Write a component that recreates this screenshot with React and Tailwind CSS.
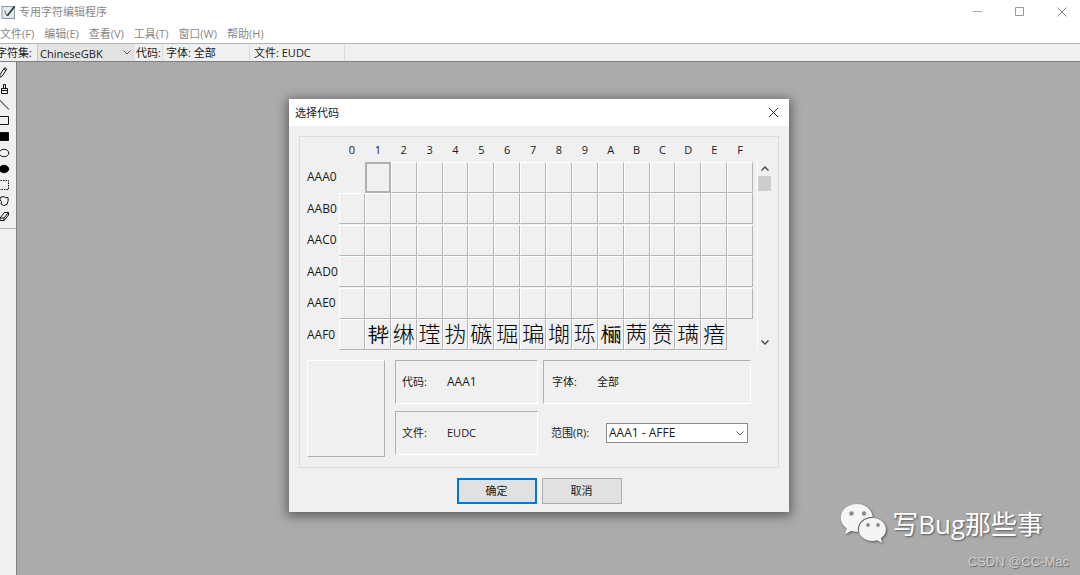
const COLUMNS = "0123456789ABCDEF".split("");
const ROWS = ["AAA0", "AAB0", "AAC0", "AAD0", "AAE0", "AAF0"];
const GLYPHS = ["", "\u{2B592}", "\u{2C62D}", "\u{2C386}", "㧑", "䃚", "\u3ed5", "㻞", "\u365f", "\u{2C35B}", "\u{2AC94}", "\u{2C72F}", "\u{2C542}", "\u{2B7A9}", "瘖"];
const MENUS = ["文件(F)", "编辑(E)", "查看(V)", "工具(T)", "窗口(W)", "帮助(H)"];

const TOOLS = [
  ["铅笔", <path key="p" d="M-.5 10.500l.7-3.200L4.800.600l2 1.600-4.500 6.800zM4 2l2 1.600" />],
  ["刷子", <path key="p" d="M3.500 5.500v-4h2v4M1.500 5.500h6v5h-6zM1.500 7.500h6" />],
  ["直线", <path key="p" d="M-1 .5l10 10" />],
  ["空心矩形", <path key="p" d="M-2 1.500H8.500v8H-2" />],
  ["实心矩形", <path key="p" d="M-2 1.500H8.500v8H-2z" fill="#000" />],
  ["空心椭圆", <ellipse key="p" cx="4" cy="6" rx="4.800" ry="3.700" />],
  ["实心椭圆", <ellipse key="p" cx="4" cy="6" rx="4.800" ry="3.700" fill="#000" />],
  ["矩形选项", <path key="p" d="M-2 1.500H8.500v9H-2" strokeDasharray="1.500 1" />],
  ["任意图形选项", <path key="p" d="M0 2.500l4-1 1.600 1.200 2.400-.2.2 3-1.200 4-3.600 1-2.400-1.500.5-2.500L0 5z" />],
  ["橡皮擦", <path key="p" d="M0 7L4.500 1.500h4L4 7zM0 7v2.500h4V7M4 9.500L8.500 4V1.500" />],
];

function Chevron({ className, up }) {
  return (
    <svg className={className} viewBox="0 0 8 5" fill="none" stroke="currentColor">
      <path d={up ? "M.5 4.5L4 1l3.5 3.5" : "M.5.5L4 4 7.5.5"} />
    </svg>
  );
}

function Cell({ row, col }) {
  if ((row === 0 && col === 0) || (row === 5 && col === 15)) return <td />;
  const selected = row === 0 && col === 1;
  const code = ROWS[row].slice(0, 3) + COLUMNS[col];
  const edges = selected
    ? "border-2 border-[#b0b0b0]"
    : "border-t border-l border-t-white border-l-white border-r border-b border-r-[#b4b4b4] border-b-[#b4b4b4]";
  return (
    <td className="p-0">
      <button
        type="button"
        aria-label={code}
        className={`flex h-[31px] w-full items-center justify-center overflow-hidden pb-1 text-[22px] leading-none font-light text-black ${edges}`}
      >
        {row === 5 ? GLYPHS[col] : ""}
      </button>
    </td>
  );
}

function InfoBox({ label, value, className }) {
  return (
    <dl className={`flex h-[44px] items-center border-t border-l border-r border-b border-t-[#b0b0b0] border-l-[#b0b0b0] border-r-white border-b-white ${className}`}>
      <dt className="w-[45px]">{label}</dt>
      <dd>{value}</dd>
    </dl>
  );
}

function CodeDialog() {
  return (
    <section role="dialog" aria-label="选择代码" className="w-[500px] self-start bg-[#f0f0f0] shadow-[0_2px_10px_2px_rgba(0,0,0,0.45)]">
      <header className="flex h-[27px] items-center justify-between bg-white pr-[10px] pl-[6px]">
        <h2>选择代码</h2>
        <button type="button" aria-label="关闭">
          <svg className="size-[11px]" viewBox="0 0 11 11" stroke="#333" fill="none"><path d="M1 1l9 9M10 1l-9 9" /></svg>
        </button>
      </header>
      <div className="px-[10px] pt-[10px] pb-2">
        <div className="border border-[#dcdcdc] pr-[7px] pb-[10px] pl-[7px]">
          <div className="flex">
            <table className="w-[446px] table-fixed border-collapse">
              <colgroup>
                <col className="w-8" />
              </colgroup>
              <thead>
                <tr className="h-6">
                  <td />
                  {COLUMNS.map((c) => (
                    <th key={c} scope="col" className="p-0 pt-[2px] text-center font-normal">{c}</th>
                  ))}
                </tr>
              </thead>
              <tbody>
                {ROWS.map((r, i) => (
                  <tr key={r} className="odd:h-[32px] even:h-[31px]">
                    <th scope="row" className="p-0 text-left text-[12px] font-normal">{r}</th>
                    {COLUMNS.map((c, j) => <Cell key={c} row={i} col={j} />)}
                  </tr>
                ))}
              </tbody>
            </table>
            <div className="mt-6 ml-[4px] flex w-[14px] flex-col items-center border-l border-white text-[#505050]">
              <button type="button" aria-label="向上滚动" className="flex h-[15px] w-full items-center justify-center">
                <Chevron up className="h-[5px] w-2 stroke-[1.5]" />
              </button>
              <div className="h-[15px] w-full bg-[#cdcdcd]" />
              <button type="button" aria-label="向下滚动" className="mt-auto flex h-[15px] w-full items-center justify-center">
                <Chevron className="h-[5px] w-2 stroke-[1.5]" />
              </button>
            </div>
          </div>
          <div className="mt-[10px] flex gap-[10px]">
            <div className="h-[97px] w-[78px] border-t border-l border-r border-b border-t-white border-l-white border-r-[#b0b0b0] border-b-[#b0b0b0]" />
            <div className="grid grid-cols-[143px_208px] content-start gap-x-[5px] gap-y-[7px]">
              <InfoBox label="代码:" value={<span className="text-[12px]">AAA1</span>} className="pl-[6px]" />
              <InfoBox label="字体:" value="全部" className="pl-2" />
              <InfoBox label="文件:" value="EUDC" className="pl-[6px]" />
              <div className="flex items-center pl-2">
                <label htmlFor="range" className="w-[55px]">范围(R):</label>
                <span className="relative flex items-center">
                  <select id="range" className="h-5 w-[142px] appearance-none border border-[#8a8a8a] bg-white pl-[2px] text-[12px] leading-none">
                    <option>AAA1 - AFFE</option>
                  </select>
                  <Chevron className="pointer-events-none absolute right-[4px] h-[5px] w-2 text-[#555]" />
                </span>
              </div>
            </div>
          </div>
        </div>
        <div className="mt-[10px] flex justify-center gap-[5px]">
          <button type="button" className="h-[26px] w-20 border-2 border-[#0078d7] bg-[#e1e1e1]">确定</button>
          <button type="button" className="h-[26px] w-20 border border-[#adadad] bg-[#e1e1e1]">取消</button>
        </div>
      </div>
    </section>
  );
}

function WeChatLogo() {
  return (
    <svg className="h-[42px] w-[48px] drop-shadow-[1px_1px_1px_rgba(0,0,0,0.5)]" viewBox="0 0 48 42">
      <path fill="#f5f5f5" d="M17 1C8 1 .8 7 .8 14.8c0 4.400 2.300 8 6 10.600L5.300 31l6-3.200c1.800.6 3.700.9 5.700.9h1C16.500 20 24 13.500 32.800 13.700 31.500 6 25 1 17 1z" />
      <path fill="#f5f5f5" d="M32.300 15C24.600 15 19 20.200 19 26.500S24.600 38 32.300 38c1.700 0 3.400-.3 4.900-.8l5 2.800-1.300-4.700c3-2.200 5-5.200 5-8.800C45.900 20.200 40 15 32.300 15z" />
      <g fill="#8c8c8c">
        <circle cx="11.500" cy="10.500" r="2.200" /><circle cx="24" cy="10.500" r="2.200" />
        <circle cx="28" cy="22" r="1.900" /><circle cx="38" cy="22" r="1.900" />
      </g>
    </svg>
  );
}

export default function App() {
  return (
    <div className="relative flex min-h-screen flex-col overflow-hidden bg-[#ababab] font-['Open_Sans','Noto_Sans_CJK_SC',sans-serif] text-[11px] leading-[16px] text-[#1a1a1a]">
      <header className="bg-white text-[#888]">
        <div className="flex h-6 items-center">
          <svg className="ml-[1px] size-[15px]" viewBox="0 0 15 15" fill="none">
            <rect x="1" y="1.500" width="12.500" height="12" fill="#e4e9ee" stroke="#8d979f" />
            <path d="M3.500 5.500L6 11l2-2" stroke="#59636e" />
            <path d="M6.500 10.500L13.500 1.500" stroke="#26303a" strokeWidth="1.600" />
          </svg>
          <h1 className="ml-[3px]">专用字符编辑程序</h1>
          <div className="ml-auto flex items-center gap-8 pr-[13px]">
            <button type="button" aria-label="最小化"><svg className="size-[10px]" viewBox="0 0 10 10" stroke="#aaa"><path d="M0 4.500h9" /></svg></button>
            <button type="button" aria-label="最大化"><svg className="size-[10px]" viewBox="0 0 10 10" fill="none" stroke="#999"><path d="M.5.500h8v8h-8z" /></svg></button>
            <button type="button" aria-label="关闭窗口"><svg className="size-[10px]" viewBox="0 0 10 10" stroke="#888"><path d="M.5.500l9 9M9.500.500l-9 9" /></svg></button>
          </div>
        </div>
        <nav className="flex h-[19px] items-center gap-[10px]">
          {MENUS.map((m) => <button key={m} type="button">{m}</button>)}
        </nav>
      </header>
      <div className="flex h-[19px] items-center border-t border-b border-t-[#b4b4b4] border-b-[#808080] bg-[#f0f0f0]">
        <label htmlFor="charset" className="-ml-[4px] w-[41px]">字符集:</label>
        <span className="relative flex h-full items-center">
          <select id="charset" className="h-full w-[98px] appearance-none border-l border-[#c8c8c8] bg-[#e3e3e3] pt-[2px] pl-[2px]">
            <option>ChineseGBK</option>
          </select>
          <Chevron className="pointer-events-none absolute right-[4px] h-[5px] w-2 text-[#555]" />
        </span>
        <span className="w-[28px] border-r border-[#dcdcdc] pl-px">代码:</span>
        <span className="w-[87px] border-r border-[#dcdcdc] pl-[3px]">字体: 全部</span>
        <span className="w-[95px] border-r border-[#dcdcdc] pl-[4px]">文件: EUDC</span>
      </div>
      <div className="flex flex-1">
        <aside className="w-[17px] border-r border-[#808080] bg-[#f0f0f0]">
          <div className="flex flex-col gap-[4px] border-b border-[#b4b4b4] pt-[5px] pb-[5px]">
            {TOOLS.map(([name, shape]) => (
              <button key={name} type="button" aria-label={name}>
                <svg className="h-3 w-[10px]" viewBox="0 0 10 12" fill="none" stroke="#111">{shape}</svg>
              </button>
            ))}
          </div>
        </aside>
        <main className="flex flex-1 justify-center pt-[37px] pr-[19px]">
          <CodeDialog />
        </main>
      </div>
      <div className="absolute right-[37px] bottom-[30px] flex items-center gap-1">
        <WeChatLogo />
        <p className="text-[26px] leading-[42px] text-white [text-shadow:1px_1px_2px_rgba(0,0,0,0.5)]">写Bug那些事</p>
      </div>
      <p className="absolute right-[11px] bottom-[5px] font-['Liberation_Sans',sans-serif] text-[13px] text-[#d0d0d0] [text-shadow:1px_1px_1px_rgba(0,0,0,0.4)]">CSDN @CC-Mac</p>
    </div>
  );
}
